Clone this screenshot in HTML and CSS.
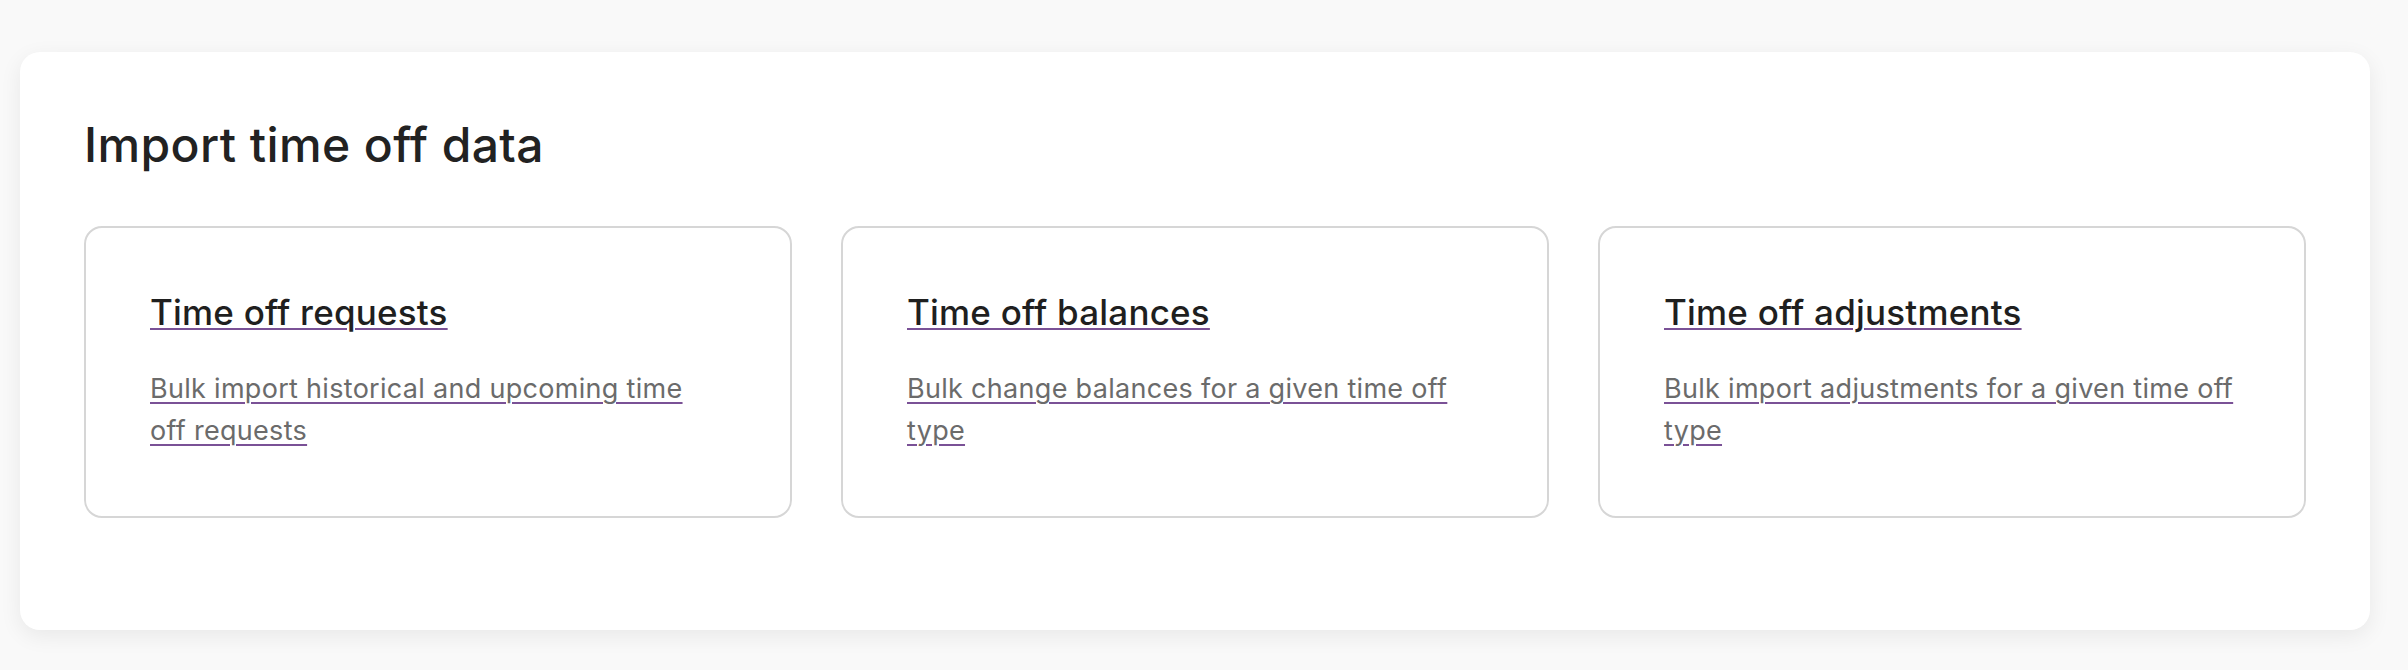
FILE: index.html
```html
<!DOCTYPE html>
<html lang="en">
<head>
<meta charset="utf-8">
<title>Import time off data</title>
<link rel="stylesheet" href="styles.css">
</head>
<body>
  <main class="panel">
    <h1 class="panel-title">Import time off data</h1>
    <div class="options">
      <div class="option">
        <a class="option-title" href="#">Time off requests</a>
        <a class="option-desc" href="#">Bulk import historical and upcoming time off requests</a>
      </div>
      <div class="option">
        <a class="option-title" href="#">Time off balances</a>
        <a class="option-desc" href="#">Bulk change balances for a given time off type</a>
      </div>
      <div class="option">
        <a class="option-title" href="#">Time off adjustments</a>
        <a class="option-desc" href="#">Bulk import adjustments for a given time off type</a>
      </div>
    </div>
  </main>
</body>
</html>
```

FILE: styles.css
```css
* { box-sizing: border-box; }
html, body {
  margin: 0;
  padding: 0;
  background: #f9f9f9;
  font-family: Inter, "Noto Sans", sans-serif;
}
body {
  padding: 52px 38px 40px 20px;
}
.panel {
  background: #ffffff;
  border-radius: 20px;
  box-shadow: 0 6px 22px rgba(0, 0, 0, 0.07);
  padding: 65px 64px 112px 64px;
  height: 578px;
}
.panel-title {
  margin: 0 0 53px 0;
  font-size: 48px;
  line-height: 56px;
  font-weight: 500;
  color: #222222;
  letter-spacing: 0.4px;
}
.options {
  display: grid;
  grid-template-columns: repeat(3, 1fr);
  gap: 49px;
}
.option {
  border: 2px solid #d6d6d6;
  border-radius: 18px;
  padding: 62px 68px 64px 64px;
  height: 292px;
  display: flex;
  flex-direction: column;
  align-items: flex-start;
  gap: 34px;
}
.option-title {
  font-size: 35px;
  line-height: 44px;
  font-weight: 500;
  color: #1f1f1f;
  text-decoration: underline;
  text-decoration-color: #7a5196;
  text-decoration-thickness: 2px;
  text-underline-offset: 3px;
  letter-spacing: 0.2px;
}
.option-desc {
  font-size: 27px;
  line-height: 42px;
  font-weight: 400;
  color: #6b6b6b;
  text-decoration: underline;
  text-decoration-color: #7a5196;
  text-decoration-thickness: 2px;
  text-underline-offset: 4px;
  letter-spacing: 0.3px;
}
```
